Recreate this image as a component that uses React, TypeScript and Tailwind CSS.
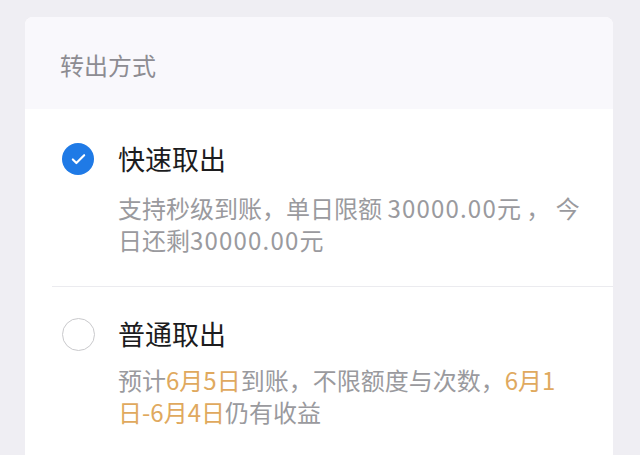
import { Check } from "lucide-react"

const font = { fontFamily: '"Noto Sans CJK SC", "Noto Sans", sans-serif' }

const num = "tracking-[1.2px]"

export default function App() {
  return (
    <div className="min-h-[455px] overflow-hidden bg-[#efeef3] pl-[25px] pr-[27px] pt-[17px]" style={font}>
      <div className="overflow-hidden rounded-t-[8px] bg-white">
        {/* section header */}
        <div className="h-[92px] bg-[#f9f8fc] pl-[35px] pt-[33px]">
          <span className="text-[24px] leading-[30px] text-[#8d8c92]">转出方式</span>
        </div>

        {/* fast withdraw */}
        <div className="ml-[27px] border-b border-[#ebebef] pb-[30px] pt-[33px]">
          <div className="flex items-center">
            <span className="ml-[10px] flex h-[32px] w-[32px] items-center justify-center rounded-full bg-[#1f7ae6]">
              <Check className="h-[17px] w-[17px] text-white" strokeWidth={3} />
            </span>
            <span className="ml-[24px] text-[27px] leading-[34px] text-[#1c1c1e]">快速取出</span>
          </div>
          <p className="ml-[66px] mt-[16px] whitespace-nowrap text-[24px] leading-[32px] text-[#9a9a9e]">
            支持秒级到账，单日限额 <span className={num}>30000.00</span>元 ， 今
            <br />
            日还剩<span className={num}>30000.00</span>元
          </p>
        </div>

        {/* normal withdraw */}
        <div className="ml-[27px] pb-[40px] pt-[30px]">
          <div className="flex items-center">
            <span className="ml-[10px] h-[33px] w-[33px] rounded-full border-[1.5px] border-[#c9c9cc]" />
            <span className="ml-[23px] text-[27px] leading-[34px] text-[#1c1c1e]">普通取出</span>
          </div>
          <p className="ml-[66px] mt-[13px] whitespace-nowrap text-[24px] leading-[32px] text-[#9a9a9e]">
            预计<span className="text-[#e0a95e]">6月5日</span>到账，不限额度与次数，
            <span className="text-[#e0a95e]">6月1</span>
            <br />
            <span className="text-[#e0a95e]">日-6月4日</span>仍有收益
          </p>
        </div>
      </div>
    </div>
  )
}
